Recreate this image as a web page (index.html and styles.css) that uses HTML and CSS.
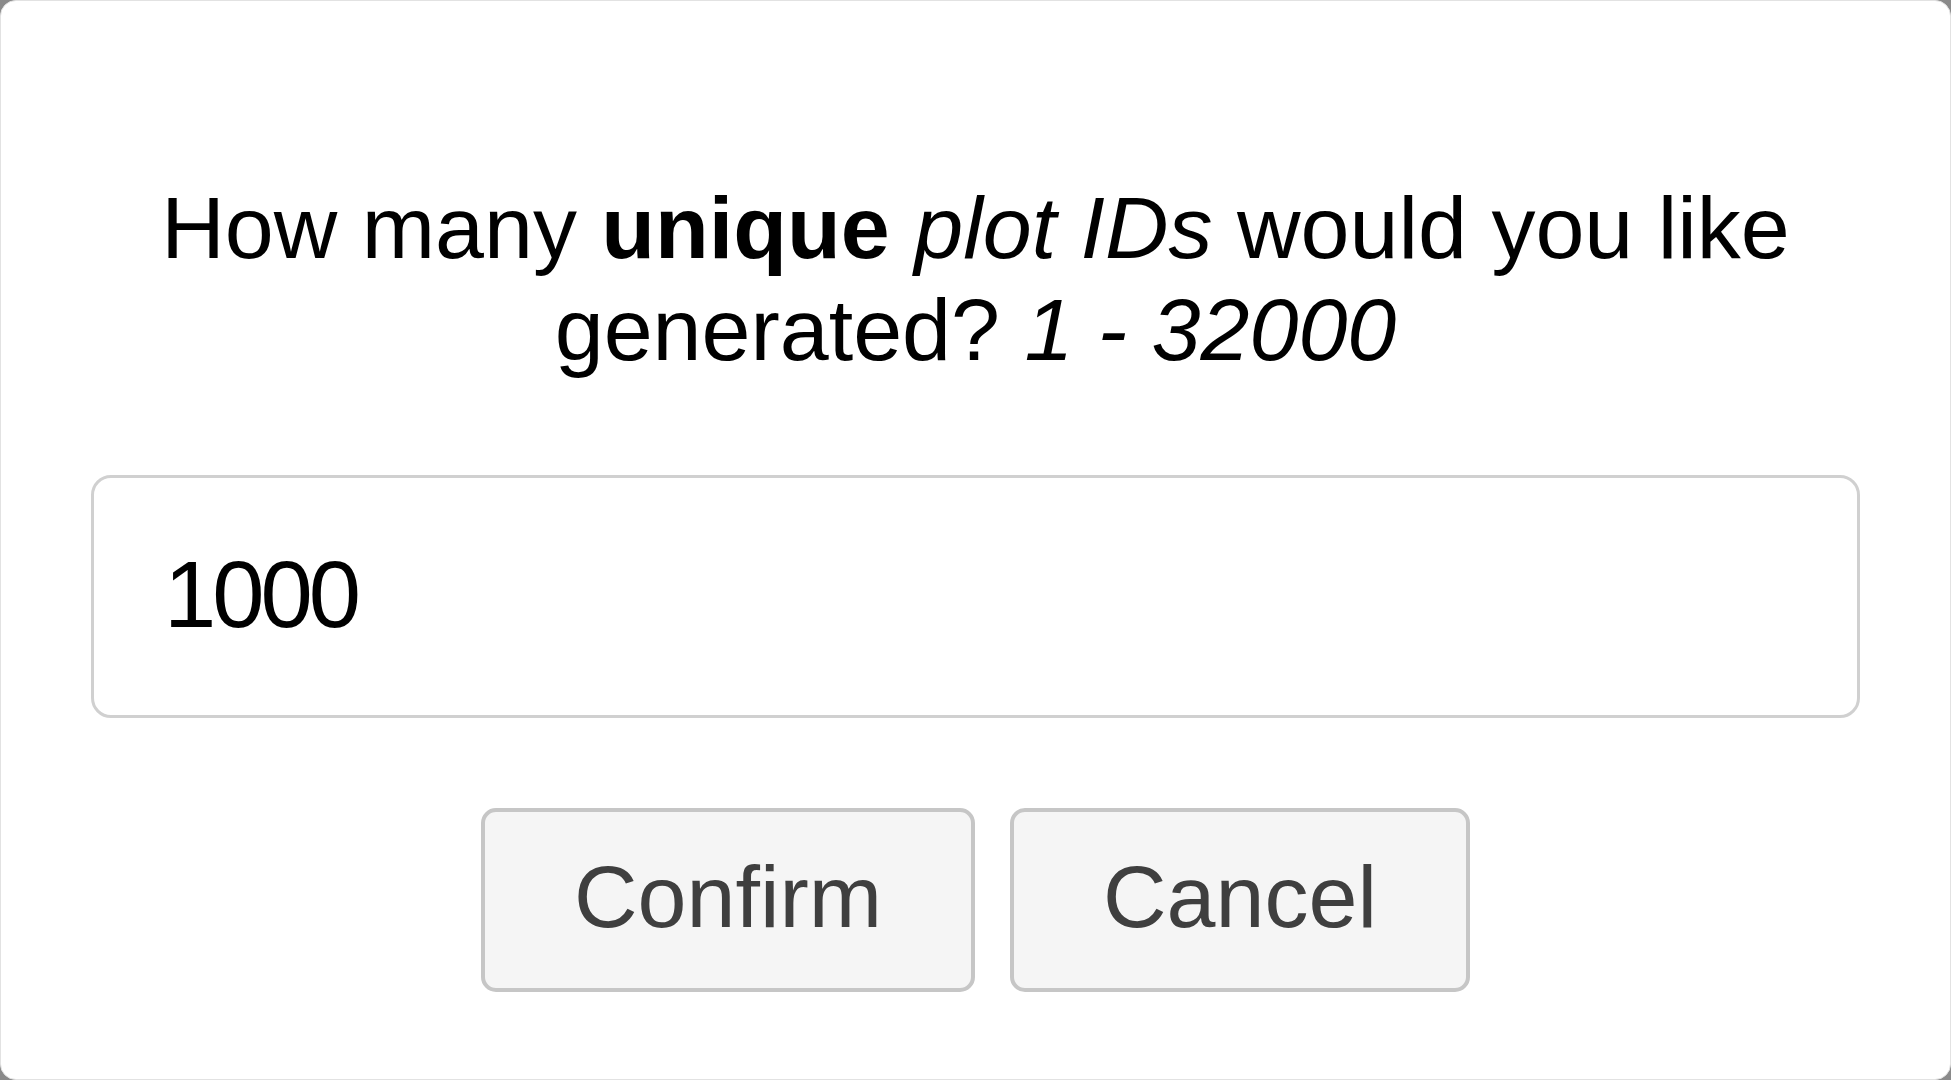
FILE: index.html
```html
<!DOCTYPE html>
<html lang="en">
<head>
    <meta charset="UTF-8">
    <meta name="viewport" content="width=device-width, initial-scale=1.0">
    <title>Generate plot IDs</title>
    <link rel="stylesheet" href="styles.css">
</head>
<body>
    <div class="dialog">
        <p class="prompt">
            How many <b>unique</b> <i>plot IDs</i> would you like generated? <i>1 - 32000</i>
        </p>

        <input class="count-input" type="text" value="1000">

        <div class="actions">
            <button class="dialog-btn">Confirm</button>
            <button class="dialog-btn">Cancel</button>
        </div>
    </div>
</body>
</html>
```

FILE: styles.css
```css
* {
    margin: 0;
    padding: 0;
    box-sizing: border-box;
}

body {
    font-family: 'Liberation Sans', Arial, sans-serif;
    background: #8a8a8a;
    height: 100vh;
    overflow: hidden;
}

.dialog {
    height: 100vh;
    background: #fff;
    border: 1px solid #e2e2e2;
    border-radius: 16px;
    padding: 176px 90px 0;
    display: flex;
    flex-direction: column;
    align-items: stretch;
}

.prompt {
    font-size: 88px;
    color: #000;
    text-align: center;
}

.count-input {
    margin-top: 94px;
    height: 243px;
    border: 3px solid #d0d0d0;
    border-radius: 20px;
    padding: 0 64px 4px 70px;
    font-family: inherit;
    font-size: 94px;
    letter-spacing: -4px;
    color: #000;
    background: #fff;
    outline: none;
}

.actions {
    margin-top: 90px;
    display: flex;
    justify-content: center;
    gap: 35px;
}

.dialog-btn {
    height: 184px;
    padding: 0 89px 6px;
    border: 4px solid #c6c6c6;
    border-radius: 15px;
    background: #f5f5f5;
    font-family: inherit;
    font-size: 88px;
    color: #3f3f3f;
    cursor: pointer;
}
```
